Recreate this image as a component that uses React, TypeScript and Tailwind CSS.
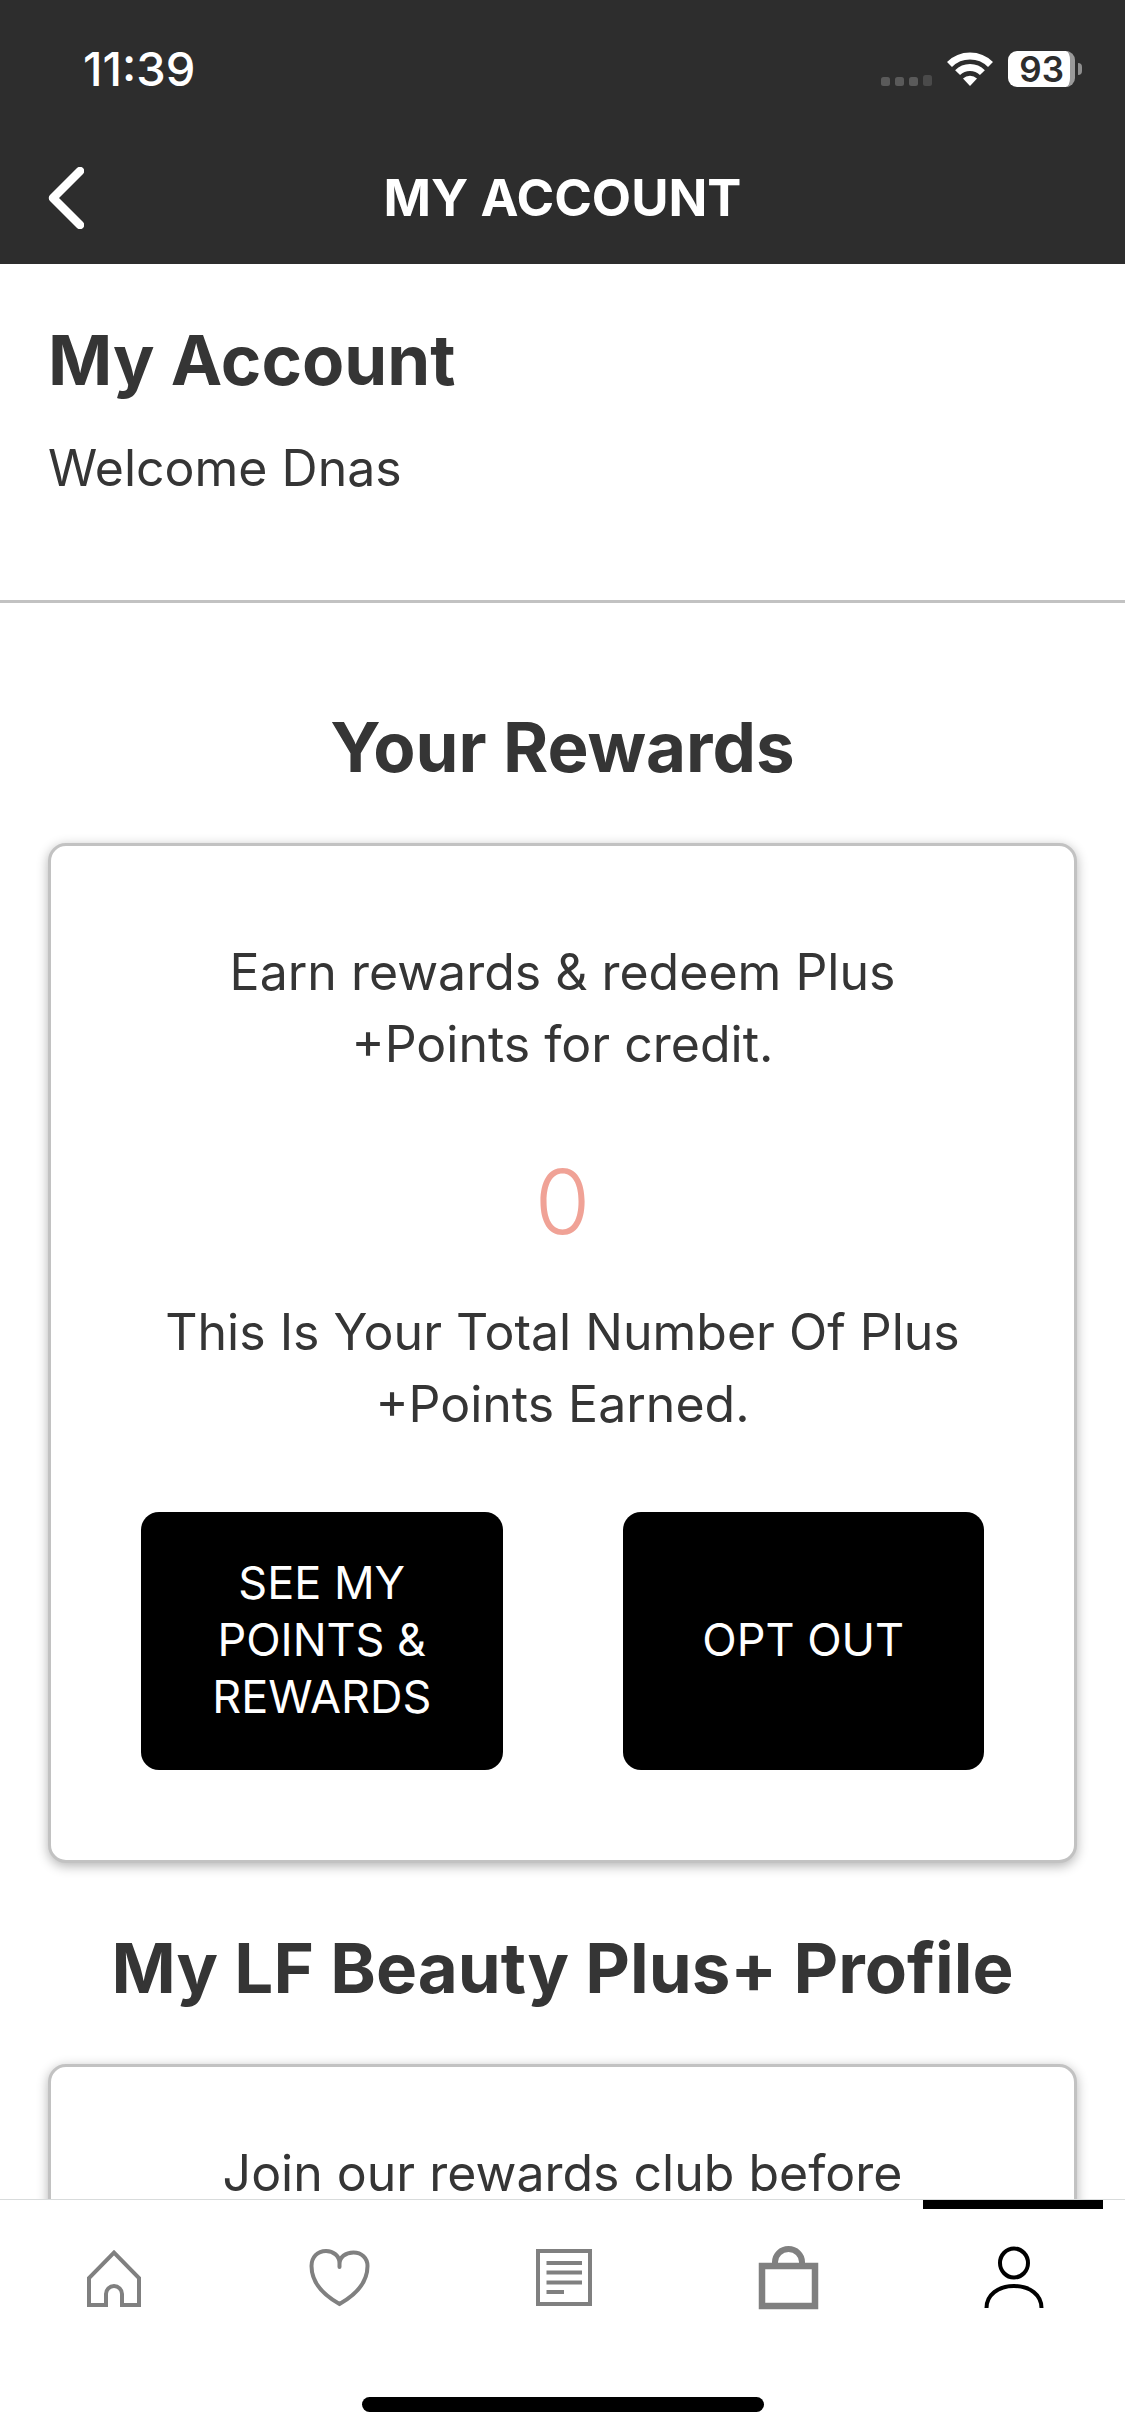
import type { ReactNode } from 'react';

function StatusBar() {
  return (
    <div className="flex h-[132px] items-center justify-between pt-[6px] pr-[43px] pl-[83px]">
      <span className="text-[47px] leading-[56px] font-medium">11:39</span>
      <div className="flex items-center gap-[15px]">
        <svg width="112" height="34" viewBox="0 0 112 34" fill="none" aria-hidden="true">
          <rect x="0" y="25" width="9" height="9" rx="2.5" fill="#5a5a5a" />
          <rect x="14" y="25" width="9" height="9" rx="2.5" fill="#5a5a5a" />
          <rect x="28" y="25" width="9" height="9" rx="2.5" fill="#5a5a5a" />
          <rect x="42" y="23" width="9" height="11" rx="2.5" fill="#4a4a4a" />
          <path d="M68.5 12.5A29 29 0 0 1 109.5 12.5" stroke="#fff" strokeWidth="7" />
          <path d="M76.6 20.6A17.5 17.5 0 0 1 101.4 20.6" stroke="#fff" strokeWidth="7" />
          <path d="M89 34L82 26.5A10 10 0 0 1 96 26.5Z" fill="#fff" />
        </svg>
        <div className="flex items-center gap-[3px]">
          <div className="flex h-[36px] items-center rounded-[9px] border-r-[5px] border-[#9a9a9a] bg-white pr-[6px] pl-[11px] text-[35px] leading-[36px] font-semibold text-[#2d2d2d]">
            93
          </div>
          <div className="h-[12px] w-[4px] rounded-r-full bg-[#8e8e8e]" />
        </div>
      </div>
    </div>
  );
}

function Header() {
  return (
    <header className="shrink-0 bg-[#2d2d2d] text-white">
      <StatusBar />
      <div className="grid h-[132px] grid-cols-[1fr_auto_1fr] items-center px-[48px]">
        <button type="button" aria-label="Back" className="justify-self-start">
          <svg width="36" height="62" viewBox="0 0 36 62" fill="none" aria-hidden="true">
            <path d="M32 4L5 31L32 58" stroke="#fff" strokeWidth="8.5" strokeLinecap="round" strokeLinejoin="round" />
          </svg>
        </button>
        <p className="text-[51px] leading-[60px] font-bold">MY ACCOUNT</p>
      </div>
    </header>
  );
}

function Card({ className, children }: { className: string; children: ReactNode }) {
  return (
    <div
      className={`mt-[54px] rounded-[18px] border-[3px] border-[#c2c2c2] bg-white px-[90px] pb-[90px] text-center text-[50px] leading-[72px] shadow-[0_3px_12px_rgba(0,0,0,0.3)] ${className}`}
    >
      {children}
    </div>
  );
}

function ActionButton({ children }: { children: ReactNode }) {
  return (
    <button
      type="button"
      className="flex min-h-[258px] items-center justify-center rounded-[18px] bg-black px-[42px] pb-[3px] text-[45px] leading-[57px] text-white"
    >
      {children}
    </button>
  );
}

function Icon({ children }: { children: ReactNode }) {
  return (
    <svg width="66" height="66" viewBox="0 0 66 66" fill="none" stroke="currentColor" strokeWidth="4" aria-hidden="true">
      {children}
    </svg>
  );
}

const tabs = [
  {
    label: 'Home',
    icon: <path d="M7 59H24V48a8 8 0 0 1 16 0V59H57V32L32 6.5L7 32Z" />,
  },
  {
    label: 'Wishlist',
    icon: (
      <path
        d="M32.5 21V17C32.5 10 26.5 5 19 5C10.5 5 4.5 11 4.5 20C4.5 36 16.5 49 32.5 58C48.5 49 60.5 36 60.5 20C60.5 12 54.5 6.5 46.5 6.5C38.5 6.5 32.5 11 32.5 18"
        strokeLinecap="round"
      />
    ),
  },
  {
    label: 'News',
    icon: (
      <>
        <rect x="7" y="5" width="52" height="53" />
        <path d="M15.5 17H51M15.5 26.5H51M15.5 36.5H51M15.5 46H33" />
      </>
    ),
  },
  {
    label: 'Bag',
    icon: (
      <>
        <rect x="7" y="20" width="53" height="40" strokeWidth="6.5" />
        <path d="M20 18V16A13.5 13 0 0 1 47 16V18" strokeWidth="6" />
      </>
    ),
  },
  {
    label: 'Account',
    icon: (
      <>
        <ellipse cx="34" cy="17" rx="14" ry="14.5" />
        <path d="M6.5 62C6.5 49 18 40 34 40C50 40 61.5 49 61.5 62" />
      </>
    ),
  },
];

function TabBar() {
  return (
    <nav className="shrink-0 border-t border-[#d9dcdc] bg-white">
      <div className="grid grid-cols-5 pl-[3px]">
        {tabs.map((tab) => {
          const active = tab.label === 'Account';
          return (
            <button
              key={tab.label}
              type="button"
              aria-label={tab.label}
              aria-current={active ? 'page' : undefined}
              className={`flex flex-col items-center ${active ? 'text-black' : 'text-[#808080]'}`}
            >
              <span className={`mb-[37px] h-[9px] w-4/5 ${active ? 'bg-black' : 'bg-transparent'}`} />
              <Icon>{tab.icon}</Icon>
            </button>
          );
        })}
      </div>
      <div className="mx-auto mt-[85px] mb-[24px] h-[15px] w-[402px] rounded-full bg-black" />
    </nav>
  );
}

export default function App() {
  return (
    <div className="flex h-screen flex-col overflow-hidden bg-white font-['Inter',sans-serif] text-[#353535]">
      <Header />
      <main className="min-h-0 flex-1 overflow-y-auto [scrollbar-width:none]">
        <section className="border-b-[3px] border-[#c2c2c2] px-[48px] pt-[54px] pb-[96px]">
          <h1 className="text-[69px] leading-[84px] font-bold">My Account</h1>
          <p className="mt-[30px] text-[50px] leading-[72px]">Welcome Dnas</p>
        </section>
        <section className="px-[48px] pt-[102px]">
          <h2 className="text-center text-[69px] leading-[84px] font-bold">Your Rewards</h2>
          <Card className="pt-[90px]">
            <p>
              Earn rewards &amp; redeem Plus
              <br />
              +Points for credit.
            </p>
            <p className="mt-[74px] text-[90px] leading-[96px] font-light text-[#f0a296]">0</p>
            <p className="mt-[46px]">
              This Is Your Total Number Of Plus
              <br />
              +Points Earned.
            </p>
            <div className="mt-[72px] grid grid-cols-2 gap-[120px]">
              <ActionButton>
                SEE MY
                <br />
                POINTS &amp;
                <br />
                REWARDS
              </ActionButton>
              <ActionButton>OPT OUT</ActionButton>
            </div>
          </Card>
        </section>
        <section className="px-[48px] pt-[63px]">
          <h2 className="text-center text-[69px] leading-[84px] font-bold">My LF Beauty Plus+ Profile</h2>
          <Card className="pt-[70px]">
            <p>Join our rewards club before</p>
          </Card>
        </section>
      </main>
      <TabBar />
    </div>
  );
}
